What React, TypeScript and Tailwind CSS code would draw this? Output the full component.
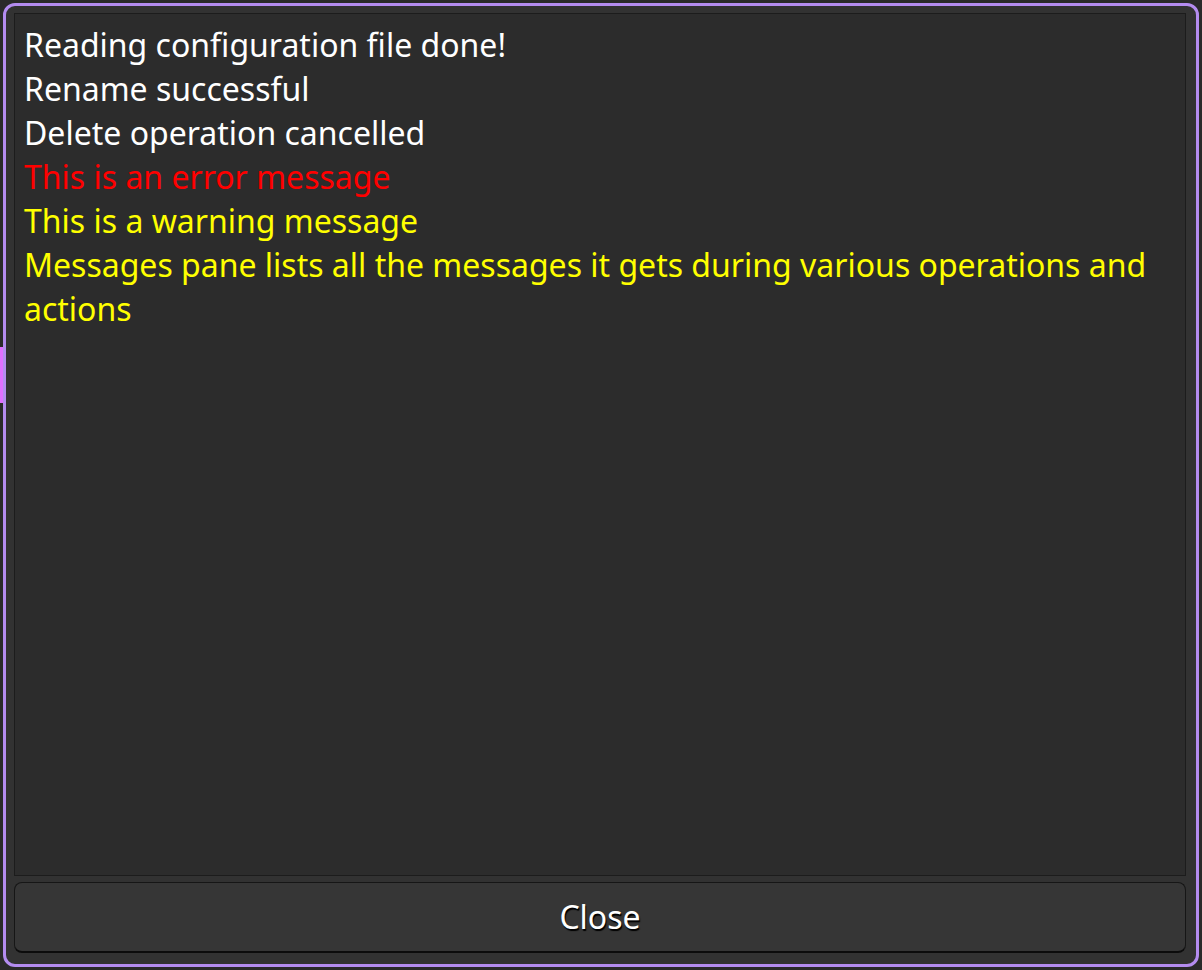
const messages = [
  { text: "Reading configuration file done!", color: "text-white" },
  { text: "Rename successful", color: "text-white" },
  { text: "Delete operation cancelled", color: "text-white" },
  { text: "This is an error message", color: "text-[#ff0000]" },
  { text: "This is a warning message", color: "text-[#ffff00]" },
  {
    text: "Messages pane lists all the messages it gets during various operations and actions",
    color: "text-[#ffff00]",
  },
];

const App = () => {
  return (
    <div
      className="relative w-[1202px] h-[970px] bg-[#2a2a2a] p-[3px]"
      style={{ fontFamily: '"Noto Sans", sans-serif' }}
    >
      {/* left edge marker */}
      <div className="absolute left-0 top-[347px] w-[3px] h-[56px] bg-[#e070ff]" />

      <div className="flex flex-col h-full rounded-[12px] border-[3px] border-[#b48cf0] bg-[#323232] pt-[7px] pl-[8px] pr-[10px] pb-[11px] gap-[6px]">
        {/* Messages pane */}
        <div className="flex-1 border border-[#1c1c1c] bg-[#2c2c2c] pl-[9px] pr-[10px] pt-[9px]">
          {messages.map((m) => (
            <div key={m.text} className={`${m.color} text-[32px] leading-[44px]`}>
              {m.text}
            </div>
          ))}
        </div>

        <button className="h-[71px] shrink-0 rounded-[8px] border border-[#161616] border-b-2 border-b-[#0c0c0c] bg-[#363636] text-white text-[32px] [text-shadow:1px_2px_1px_#000]">
          Close
        </button>
      </div>
    </div>
  );
};

export default App;
